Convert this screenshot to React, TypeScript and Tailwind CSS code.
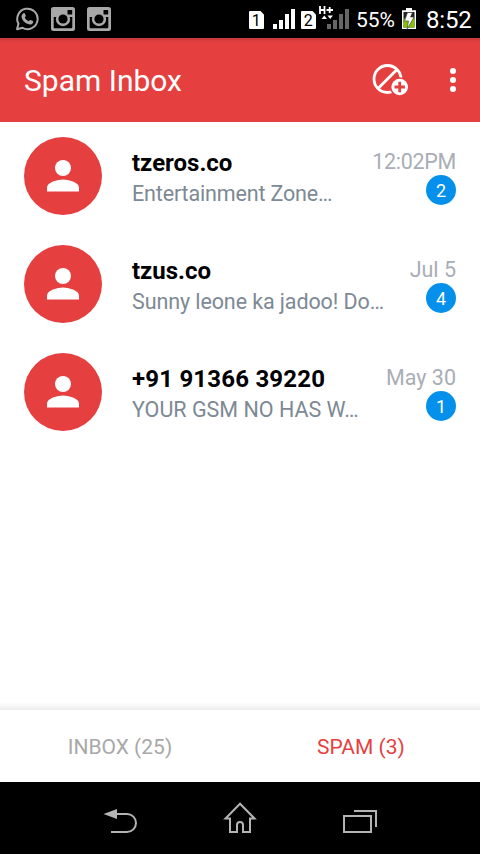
import React from "react";

type Message = {
  sender: string;
  senderClass?: string;
  preview: string;
  previewClass?: string;
  time: string;
  timeClass?: string;
  unread: number;
};

const messages: Message[] = [
  {
    sender: "tzeros.co",
    preview: "Entertainment Zone…",
    previewClass: "tracking-[-0.16px]",
    time: "12:02PM",
    timeClass: "tracking-[-0.3px]",
    unread: 2
  },
  {
    sender: "tzus.co",
    preview: "Sunny leone ka jadoo! Do…",
    previewClass: "tracking-[-0.1px]",
    time: "Jul 5",
    unread: 4
  },
  {
    sender: "+91 91366 39220",
    senderClass: "tracking-[0.2px]",
    preview: "YOUR GSM NO HAS W…",
    time: "May 30",
    unread: 1
  }
];

const WhatsAppIcon: React.FC = () => (
  <svg viewBox="0 0 24 24" className="h-6 w-6 shrink-0" fill="none">
    <path
      d="M2 22.300 3.500 16.800A10.200 10.200 0 1 1 7.500 20.800Z"
      stroke="#a8a8a8"
      strokeWidth="2"
      strokeLinejoin="round"
    />
    <path
      d="M8.400 6.200c.5-.4 1-.3 1.300.2l1.100 2.200c.2.5-.1.9-1 1.900.8 1.700 2.100 3 4 3.800.8-1 1.200-1.500 1.700-1.300l2.300 1.100c.5.3.5.7.3 1.300-.5 1.400-2 2.200-3.400 2-4.300-.7-7.600-3.900-8.200-7.400-.2-1.500.8-3.100 1.900-3.800Z"
      fill="#a8a8a8"
    />
  </svg>
);

const InstagramIcon: React.FC = () => (
  <svg viewBox="0 0 24 24" className="h-6 w-6 shrink-0">
    <rect width="24" height="24" rx="2.500" fill="#a8a8a8" />
    <path d="M2.700 10H21.300V20.300a1 1 0 0 1-1 1H3.700a1 1 0 0 1-1-1Z" fill="#000" />
    <circle cx="12" cy="12" r="7.200" fill="#a8a8a8" />
    <circle cx="12" cy="12" r="4.600" fill="#000" />
    <rect x="16.500" y="3" width="4.700" height="4.500" rx="0.500" fill="#000" />
  </svg>
);

const SimIcon: React.FC<{ slot: number }> = ({ slot }) => (
  <svg viewBox="0 0 15 18" className="h-[18px] w-[15px] shrink-0">
    <path d="M1 0h10.500L15 3.500V17a1 1 0 0 1-1 1H1a1 1 0 0 1-1-1V1a1 1 0 0 1 1-1Z" fill="#fff" />
    <text
      x="7.200"
      y="15"
      textAnchor="middle"
      className="fill-black font-[Roboto,sans-serif] text-base"
    >
      {slot}
    </text>
  </svg>
);

const SignalIcon: React.FC = () => (
  <svg viewBox="0 0 22 20" className="h-5 w-[22px] shrink-0" fill="#fff">
    <rect x="0" y="15" width="4" height="5" />
    <rect x="6" y="11" width="4" height="9" />
    <rect x="12" y="5" width="4" height="15" />
    <rect x="18" y="0" width="4" height="20" />
  </svg>
);

const DataSignalIcon: React.FC = () => (
  <svg viewBox="0 0 32 24" className="h-6 w-8 shrink-0">
    <g fill="#666">
      <rect x="9" y="19" width="4" height="5" />
      <rect x="15" y="15" width="4" height="9" />
      <rect x="21" y="9" width="4" height="15" />
      <rect x="27" y="4" width="4" height="20" />
    </g>
    <path d="M2 1v8M6.500 1v8M2 5h4.500M8.500 5H15M11.700 2v6" stroke="#fff" strokeWidth="1.800" fill="none" />
    <path d="M3.500 14 6.300 10.500l2.700 3.500ZM9.500 10.500h5.400l-2.700 3.500Z" fill="#fff" />
  </svg>
);

const BatteryIcon: React.FC = () => (
  <svg viewBox="0 0 14 22" className="h-[22px] w-[14px] shrink-0">
    <path d="M4 0h6v2.300H14V21H0V2.300h4Z" fill="#fff" />
    <rect x="1.500" y="4" width="11" height="15.500" fill="#222" />
    <rect x="1.500" y="10.500" width="11" height="9" fill="#84c00c" />
    <path d="M5.500 4.500h5L8.500 9H12L5 21.500 6.500 13H2.500Z" fill="#fff" stroke="#333" strokeWidth="0.600" />
  </svg>
);

const BlockAddIcon: React.FC = () => (
  <svg viewBox="0 0 38 34" className="h-[34px] w-[38px]" fill="none">
    <circle cx="15.500" cy="16" r="13.500" stroke="#fff" strokeWidth="2.800" />
    <path d="M6 25.500 25 6.500" stroke="#fff" strokeWidth="2.800" />
    <circle cx="27.700" cy="24" r="9.800" fill="#e63f3f" />
    <circle cx="27.700" cy="24" r="8.300" fill="#fff" />
    <path d="M27.700 18.800v10.400M22.500 24h10.400" stroke="#e63f3f" strokeWidth="2.800" />
  </svg>
);

const Avatar: React.FC = () => (
  <div className="flex h-[78px] w-[78px] shrink-0 items-center justify-center rounded-full bg-[#e63f3f]">
    <svg viewBox="0 0 32 32" className="h-8 w-8" fill="#fff">
      <circle cx="16" cy="8" r="8" />
      <path d="M0 31.500v-4c0-5.300 10.700-8 16-8s16 2.700 16 8v4Z" />
    </svg>
  </div>
);

const MessageRow: React.FC<{ message: Message }> = ({ message }) => (
  <li className="flex h-[108px] items-center px-6">
    <Avatar />
    <div className="ml-[30px] min-w-0 flex-1 pt-1 whitespace-nowrap">
      <div className={`mt-0.5 text-2xl leading-[30px] font-bold text-black ${message.senderClass ?? ""}`}>
        {message.sender}
      </div>
      <div className={`text-[21.500px] leading-8 text-[#7d8994] ${message.previewClass ?? ""}`}>
        {message.preview}
      </div>
    </div>
    <div className="flex flex-col items-end">
      <span className={`pt-0.5 text-[21.500px] leading-[26px] whitespace-nowrap text-[#a9adb5] ${message.timeClass ?? ""}`}>
        {message.time}
      </span>
      <span className="flex h-[30px] w-[30px] items-center justify-center rounded-full bg-[#0590ec] pt-px text-lg leading-none text-white">
        {message.unread}
      </span>
    </div>
  </li>
);

const StatusBar: React.FC = () => (
  <div className="flex h-[38px] shrink-0 items-center bg-black pr-[9px] pl-[15px] text-white">
    <div className="flex gap-3">
      <WhatsAppIcon />
      <InstagramIcon />
      <InstagramIcon />
    </div>
    <div className="ml-auto flex items-center">
      <div className="mt-0.5">
        <SimIcon slot={1} />
      </div>
      <div className="ml-[9px]">
        <SignalIcon />
      </div>
      <div className="mt-0.5 ml-1.5">
        <SimIcon slot={2} />
      </div>
      <div className="-mt-1 ml-0.5">
        <DataSignalIcon />
      </div>
      <span className="ml-1.5 w-10 pt-0.5 text-[21px] leading-9 whitespace-nowrap">55%</span>
      <div className="ml-1.5">
        <BatteryIcon />
      </div>
      <span className="ml-2.5 w-[45px] pt-0.5 text-2xl leading-9 tracking-[-0.2px] whitespace-nowrap">8:52</span>
    </div>
  </div>
);

const App: React.FC = () => {
  return (
    <div className="flex h-[854px] w-[480px] flex-col overflow-hidden bg-white font-[Roboto,sans-serif]">
      <StatusBar />

      {/* App bar */}
      <header className="flex h-[84px] shrink-0 items-center bg-[#e63f3f] bg-linear-to-b from-[#c93838] to-[#e63f3f] to-[5px] pl-6 text-white">
        <h1 className="pt-0.5 text-[30px] leading-9 whitespace-nowrap">Spam Inbox</h1>
        <button type="button" className="ml-auto" aria-label="Add to block list">
          <BlockAddIcon />
        </button>
        <button type="button" className="mr-6 ml-10 flex flex-col gap-[3px]" aria-label="More options">
          <span className="h-1.5 w-1.5 rounded-full bg-white" />
          <span className="h-1.5 w-1.5 rounded-full bg-white" />
          <span className="h-1.5 w-1.5 rounded-full bg-white" />
        </button>
      </header>

      {/* Messages */}
      <ul className="flex-1">
        {messages.map((m) => (
          <MessageRow key={m.sender} message={m} />
        ))}
      </ul>

      {/* Tabs */}
      <div className="h-2 shrink-0 bg-linear-to-b from-white to-[#ececec]" />
      <div className="grid h-[72px] shrink-0 grid-cols-2 bg-white text-[21px]">
        <button type="button" className="pt-1 text-[#a8a8a8]">
          INBOX (25)
        </button>
        <button type="button" className="pt-1 pl-0.5 text-[#e63f3f]">
          SPAM (3)
        </button>
      </div>

      {/* Navigation bar */}
      <nav className="grid h-[72px] shrink-0 grid-cols-3 items-center justify-items-center bg-black px-15">
        <svg viewBox="0 0 36 32" className="h-8 w-9" fill="none">
          <path d="M14 12H25a9 9 0 0 1 0 18H9" stroke="#b4b4b4" strokeWidth="2" />
          <path d="M1.500 12 15 7v10Z" fill="#b4b4b4" />
        </svg>
        <svg viewBox="0 0 36 34" className="h-[34px] w-9" fill="none">
          <path
            d="M18 2.700 3.500 17.500H8V31h7v-7a3 3 0 0 1 6 0v7h7V17.500h4.500Z"
            stroke="#b4b4b4"
            strokeWidth="2"
          />
        </svg>
        <svg viewBox="0 0 36 32" className="h-8 w-9" fill="none" stroke="#b4b4b4" strokeWidth="2">
          <rect x="2" y="14" width="27" height="16" />
          <path d="M12 9h22v16" />
        </svg>
      </nav>
    </div>
  );
};

export default App;
